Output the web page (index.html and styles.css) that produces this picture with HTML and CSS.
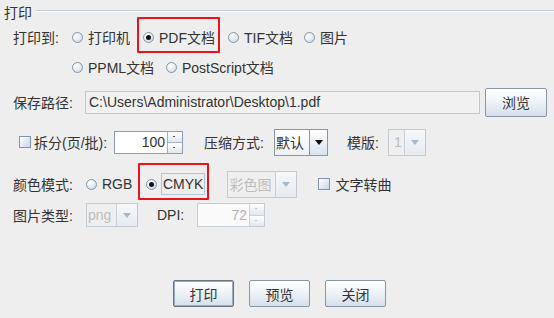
FILE: index.html
```html
<!DOCTYPE html>
<html lang="zh">
<head>
<meta charset="utf-8">
<link rel="stylesheet" href="styles.css">
</head>
<body>
<div class="dlg">
  <div class="title"><span>打印</span><i class="line"></i></div>

  <div class="row r1">
    <span class="lbl w59">打印到:</span>
    <span class="radio w71"><span class="rb"></span><span class="rt">打印机</span></span>
    <span class="radio w85 hl1"><span class="rb on"></span><span class="rt">PDF文档</span></span>
    <span class="radio w76"><span class="rb"></span><span class="rt">TIF文档</span></span>
    <span class="radio"><span class="rb"></span><span class="rt">图片</span></span>
  </div>

  <div class="row r2">
    <span class="radio w94"><span class="rb"></span><span class="rt">PPML文档</span></span>
    <span class="radio"><span class="rb"></span><span class="rt">PostScript文档</span></span>
  </div>

  <div class="row r3">
    <span class="lbl w72">保存路径:</span>
    <span class="field path">C:\Users\Administrator\Desktop\1.pdf</span>
    <span class="btn browse">浏览</span>
  </div>

  <div class="row r4">
    <span class="cb"></span>
    <span class="lbl w80 cbt">拆分(页/批):</span>
    <span class="spin w69"><span class="sv">100</span><span class="sa"><i class="up"></i><i class="dn"></i></span></span>
    <span class="lbl w70 ml21">压缩方式:</span>
    <span class="combo w54"><span class="cv">默认</span><span class="ca"><i class="tri"></i></span></span>
    <span class="lbl w41 ml19">模版:</span>
    <span class="combo dis w38"><span class="cv c1">1</span><span class="ca"><i class="tri"></i></span></span>
  </div>

  <div class="row r5">
    <span class="lbl w73">颜色模式:</span>
    <span class="radio w60"><span class="rb"></span><span class="rt">RGB</span></span>
    <span class="radio hl2"><span class="rb on"></span><span class="rt focus">CMYK</span></span>
    <span class="combo dis w70 ml22"><span class="cv">彩色图</span><span class="ca"><i class="tri"></i></span></span>
    <span class="cb ml21"></span>
    <span class="lbl cbt2">文字转曲</span>
  </div>

  <div class="row r6">
    <span class="lbl w73">图片类型:</span>
    <span class="combo dis w52 h24"><span class="cv">png</span><span class="ca"><i class="tri"></i></span></span>
    <span class="lbl w40 ml19">DPI:</span>
    <span class="spin dis w68 h24"><span class="sv">72</span><span class="sa"><i class="up"></i><i class="dn"></i></span></span>
  </div>

  <div class="buttons">
    <span class="btn act">打印</span>
    <span class="btn">预览</span>
    <span class="btn">关闭</span>
  </div>
</div>
</body>
</html>
```

FILE: styles.css
```css
html, body {
  margin: 0;
  padding: 0;
}
body {
  background: #eeeeee;
  font-family: "Liberation Sans", "Noto Sans CJK SC", sans-serif;
  font-size: 14px;
  color: #333333;
  width: 554px;
  height: 318px;
  overflow: hidden;
}
.dlg {
  width: 554px;
}
.title {
  display: flex;
  align-items: center;
  height: 24px;
  padding-left: 4px;
}
.title .line {
  flex: 1;
  margin-left: 4px;
  margin-top: -3px;
  border-top: 1px solid #c3ced9;
  border-bottom: 1px solid #fbfbfb;
}
.row {
  display: flex;
  align-items: center;
  padding-left: 13px;
}
.r1 { height: 30px; margin-top: -2px; }
.r2 { height: 30px; padding-left: 72px; }
.r3 { height: 30px; margin-top: 5px; }
.r4 { height: 28px; margin-top: 11px; padding-left: 19px; }
.r5 { height: 28px; margin-top: 14px; }
.r6 { height: 28px; margin-top: 3px; }

.lbl { white-space: nowrap; flex: none; }
.w38 { width: 38px; }
.w40 { width: 40px; }
.w41 { width: 41px; }
.w52 { width: 52px; }
.w54 { width: 54px; }
.w59 { width: 59px; }
.w60 { width: 60px; }
.w68 { width: 68px; }
.w69 { width: 69px; }
.w70 { width: 70px; }
.w71 { width: 71px; }
.w72 { width: 72px; }
.w73 { width: 73px; }
.w76 { width: 76px; }
.w80 { width: 80px; }
.w85 { width: 85px; }
.w94 { width: 94px; }
.ml19 { margin-left: 19px; }
.ml21 { margin-left: 21px; }
.ml22 { margin-left: 22px; }
.h24 { height: 24px !important; }

/* radios */
.radio {
  position: relative;
  display: flex;
  align-items: center;
  align-self: stretch;
  flex: none;
  white-space: nowrap;
}
.rb {
  box-sizing: border-box;
  width: 11px;
  height: 11px;
  border-radius: 50%;
  border: 1px solid #8196aa;
  background: radial-gradient(circle at 35% 30%, #ffffff 0%, #e8eef5 45%, #c3d2e1 100%);
  position: relative;
  flex: none;
}
.rb.on::after {
  content: "";
  position: absolute;
  left: 2px;
  top: 2px;
  width: 5px;
  height: 5px;
  border-radius: 50%;
  background: #111111;
}
.rt { margin-left: 5px; }
.rt.focus {
  margin-left: 4px;
  padding: 0 1px;
  height: 20px;
  line-height: 20px;
  border: 1px solid #b3c6d9;
}
.hl1::after, .hl2::after {
  content: "";
  position: absolute;
  border: 2px solid #e8141c;
  border-radius: 1px;
  box-sizing: border-box;
}
.hl1::after {
  left: -6px;
  top: -5px;
  width: 83px;
  height: 36px;
}
.hl2::after {
  left: -8px;
  top: -7px;
  width: 71px;
  height: 37px;
}

/* checkbox */
.cb {
  box-sizing: border-box;
  width: 12px;
  height: 12px;
  border: 1px solid #8196aa;
  background: linear-gradient(135deg, #ffffff 0%, #dfe7f0 60%, #c8d5e3 100%);
  flex: none;
}
.cbt { margin-left: 3px; }
.cbt2 { margin-left: 5px; }

/* text field */
.field {
  box-sizing: border-box;
  display: flex;
  align-items: center;
  flex: none;
  white-space: nowrap;
}
.path {
  width: 395px;
  height: 23px;
  padding-left: 3px;
  border: 1px solid #bccad8;
  background: #f1f1f1;
  color: #333333;
}

/* buttons */
.btn {
  box-sizing: border-box;
  display: flex;
  align-items: center;
  justify-content: center;
  flex: none;
  width: 61px;
  height: 27px;
  border: 1px solid #8797a8;
  border-radius: 2px;
  background: linear-gradient(#ffffff 0%, #f1f5f9 40%, #d5e0eb 100%);
  color: #333333;
}
.browse {
  width: 62px;
  height: 29px;
  margin-left: 5px;
}
.btn.act {
  border: 1px solid #6c7680;
  box-shadow: inset 0 0 0 1px #9aaaba;
}
.buttons {
  display: flex;
  gap: 15px;
  padding-left: 173px;
  margin-top: 51px;
}

/* spinner */
.spin {
  box-sizing: border-box;
  display: flex;
  flex: none;
  height: 23px;
  border: 1px solid #8d9dad;
  background: #ffffff;
}
.spin .sv {
  flex: 1;
  display: flex;
  align-items: center;
  justify-content: flex-end;
  padding-right: 2px;
}
.spin .sa {
  display: flex;
  flex-direction: column;
  width: 14px;
  border-left: 1px solid #a6b4c2;
}
.spin .sa i {
  flex: 1;
  position: relative;
  background: linear-gradient(#ffffff, #e1e8ef);
}
.spin .sa i.dn {
  border-top: 1px solid #a6b4c2;
}
.spin .sa i::after {
  content: "";
  position: absolute;
  left: 5px;
  top: 4px;
  width: 2px;
  height: 1px;
  background: #555555;
}
.spin.dis {
  border-color: #c4ccd4;
  background: #fafafa;
  color: #b4b4b4;
}
.spin.dis .sa {
  border-left-color: #ccd4dc;
}
.spin.dis .sa i.dn {
  border-top-color: #ccd4dc;
}
.spin.dis .sa i::after {
  background: #b8c2cc;
}

/* combo */
.combo {
  box-sizing: border-box;
  display: flex;
  flex: none;
  height: 27px;
  border: 1px solid #8797a8;
  background: linear-gradient(#ffffff, #eef2f6);
}
.combo .cv {
  flex: 1;
  display: flex;
  align-items: center;
  padding-left: 1px;
  white-space: nowrap;
  overflow: hidden;
}
.combo .ca {
  width: 17px;
  display: flex;
  align-items: center;
  justify-content: center;
  border-left: 1px solid #8797a8;
  background: linear-gradient(#ffffff, #d9e3ed);
}
.combo .tri {
  width: 0;
  height: 0;
  border-left: 4px solid transparent;
  border-right: 4px solid transparent;
  border-top: 5px solid #111111;
}
.combo.dis {
  border-color: #c2cad2;
  background: #efefef;
  color: #bdbdbd;
}
.combo.dis .ca {
  width: 20px;
  border-left-color: #c8d0d8;
  background: linear-gradient(#f6f8fa, #e6ebf0);
}
.combo.dis .tri {
  border-top-color: #a9b9c9;
}
.combo .c1 {
  padding-left: 5px;
}
```
